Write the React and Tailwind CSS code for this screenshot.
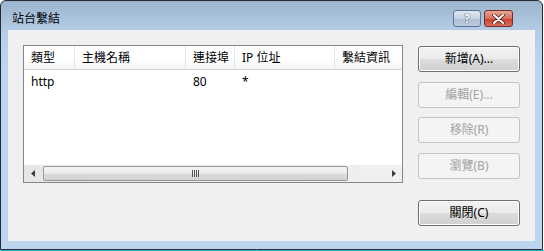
import React from "react";

const columns = [
  { label: "類型", w: "w-[51px]" },
  { label: "主機名稱", w: "w-[111px]" },
  { label: "連接埠", w: "w-[49px]" },
  { label: "IP 位址", w: "w-[100px]" },
  { label: "繫結資訊", w: "w-[100px]" },
];

const rows = [["http", "", "80", "*", ""]];

function WinButton({ label, disabled, className = "" }) {
  return (
    <div
      className={
        "h-[26px] w-[102px] rounded-[3px] border flex items-center justify-center text-[12px] " +
        (disabled
          ? "border-[#c2c5c8] bg-[#f4f4f4] text-[#a3a3a3] "
          : "border-[#707070] bg-[linear-gradient(#f2f2f2_0%,#ebebeb_50%,#dddddd_51%,#cfcfcf_100%)] text-black shadow-[inset_0_0_0_1px_#fcfcfc] ") +
        className
      }
    >
      {label}
    </div>
  );
}

function Arrow({ dir }) {
  return (
    <div className="w-[17px] h-full flex items-center justify-center">
      <svg width="4" height="7" viewBox="0 0 4 7">
        {dir === "left" ? (
          <path d="M4 0 L0 3.5 L4 7 Z" fill="#3c3c3c" />
        ) : (
          <path d="M0 0 L4 3.5 L0 7 Z" fill="#3c3c3c" />
        )}
      </svg>
    </div>
  );
}

export default function App() {
  return (
    <div className="w-[544px] h-[251px] bg-white font-['Noto_Sans','Noto_Sans_CJK_TC',sans-serif] overflow-hidden flex flex-col">
      <div className="w-[543px] h-[250px] shrink-0 border border-[#222b36] rounded-t-[6px] bg-[linear-gradient(#9cb5cf_0px,#b4cce6_30px,#bcd4ee_60px)] flex flex-col">
        {/* title bar */}
        <div className="h-[29px] flex items-start justify-between pl-[11px] pr-[29px]">
          <div className="pt-[10px] text-[12px] leading-[16px] text-black">站台繫結</div>
          <div className="flex gap-[3px] mt-[9px]">
            <div className="w-[28px] h-[17px] rounded-[3px] border border-[#5e7390] bg-[linear-gradient(#dfe8f2_0%,#c4d3e4_50%,#a9bdd4_51%,#bccce0_100%)] flex items-center justify-center">
              <span className="text-[12px] leading-none font-bold text-white [text-shadow:0_0_1px_#34465c,0_0_1px_#34465c]">?</span>
            </div>
            <div className="w-[29px] h-[17px] rounded-[3px] border border-[#7a2b24] bg-[linear-gradient(#e8a596_0%,#d86f5d_50%,#c43f2c_51%,#d6705a_100%)] flex items-center justify-center">
              <svg width="13" height="10" viewBox="0 0 13 10">
                <path d="M2 1 L11 9 M11 1 L2 9" stroke="#5a1e18" strokeWidth="3.6" strokeLinecap="round" />
                <path d="M2 1 L11 9 M11 1 L2 9" stroke="#ffffff" strokeWidth="2" strokeLinecap="round" />
              </svg>
            </div>
          </div>
        </div>

        {/* client area */}
        <div className="mx-[7px] h-[211px] bg-[#f0f0f0] flex pl-[15px] pt-[15px]">
          {/* list view */}
          <div className="w-[380px] h-[138px] border border-[#828790] bg-white flex flex-col overflow-hidden">
            <div className="h-[24px] flex border-b border-[#d5d5d5] bg-[linear-gradient(#ffffff_0%,#ffffff_60%,#f3f4f6_100%)] shrink-0">
              {columns.map((c) => (
                <div
                  key={c.label}
                  className={c.w + " shrink-0 border-r border-[#e3e6ea] pl-[7px] flex items-center text-[12px] text-black whitespace-nowrap"}
                >
                  {c.label}
                </div>
              ))}
            </div>
            <div className="flex-1">
              {rows.map((r, i) => (
                <div key={i} className="h-[20px] flex items-end">
                  {r.map((cell, j) => (
                    <div key={j} className={columns[j].w + " shrink-0 pl-[7px] text-[12px] leading-[16px] text-black"}>
                      {cell}
                    </div>
                  ))}
                </div>
              ))}
            </div>
            {/* horizontal scrollbar */}
            <div className="h-[17px] flex bg-[linear-gradient(90deg,#e6e6e6,#f0f0f0)] shrink-0">
              <Arrow dir="left" />
              <div className="flex-1 flex items-center">
                <div className="ml-[2px] w-[305px] h-[15px] rounded-[2px] border border-[#979797] bg-[linear-gradient(#f4f4f4_0%,#e9e9e9_50%,#dadada_51%,#d2d2d2_100%)] flex items-center justify-center">
                  <svg width="7" height="7" viewBox="0 0 7 7">
                    <path d="M0.5 0 V7 M2.5 0 V7 M4.5 0 V7 M6.5 0 V7" stroke="#555" strokeWidth="1" />
                  </svg>
                </div>
              </div>
              <Arrow dir="right" />
            </div>
          </div>

          {/* buttons */}
          <div className="ml-[15px] flex flex-col pt-[1px]">
            <WinButton label="新增(A)..." />
            <WinButton label="編輯(E)..." disabled className="mt-[10px]" />
            <WinButton label="移除(R)" disabled className="mt-[9px]" />
            <WinButton label="瀏覽(B)" disabled className="mt-[10px]" />
            <WinButton label="關閉(C)" className="mt-[21px]" />
          </div>
        </div>
      </div>
      <div className="h-[1px] w-full bg-[#2bb7c9]" />
    </div>
  );
}
